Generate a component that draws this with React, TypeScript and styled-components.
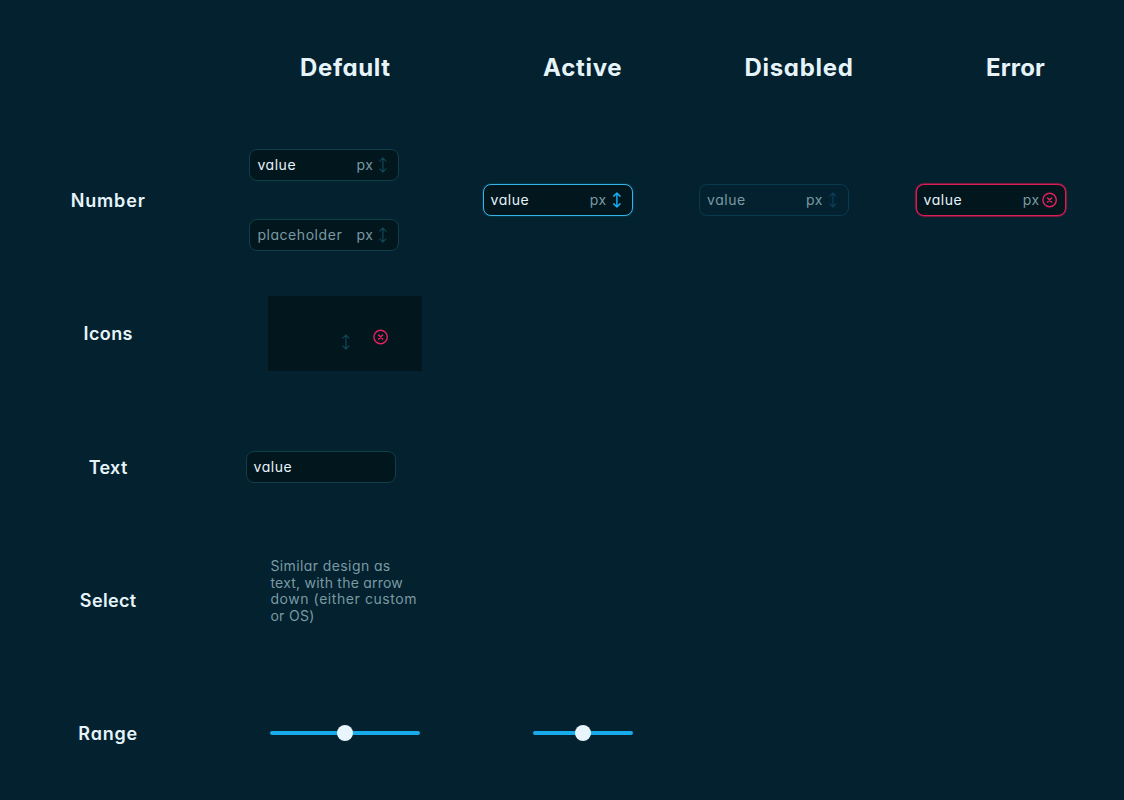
import React from "react";
import styled, { createGlobalStyle, css } from "styled-components";

const Global = createGlobalStyle`
  * { box-sizing: border-box; }
  body {
    margin: 0;
    background: #03212e;
    font-family: Inter, "Open Sans", sans-serif;
    font-feature-settings: "cv11";
  }
`;

type FieldState = "default" | "active" | "disabled" | "error";

const Board = styled.main`
  display: grid;
  grid-template-columns: 216.4px 258px 216.6px 216px 217px;
  grid-template-rows: repeat(6, 1fr);
  width: 1124px;
  height: 800px;
  overflow: hidden;
`;

const ColumnTitle = styled.h2<{ $spacing: number }>`
  margin: 0;
  padding-top: 2px;
  place-self: center;
  color: #e6f4fa;
  font-size: 24px;
  font-weight: 700;
  line-height: 32px;
  letter-spacing: ${(p) => p.$spacing}px;
`;

const RowTitle = styled.h3<{ $spacing: number }>`
  margin: 0;
  padding-top: 2px;
  place-self: center;
  color: #e6f4fa;
  font-size: 18px;
  font-weight: 600;
  line-height: 24px;
  letter-spacing: ${(p) => p.$spacing}px;
`;

const Cell = styled.div<{ $indent?: number }>`
  display: flex;
  flex-direction: column;
  justify-content: center;
  gap: 38px;
  align-items: ${(p) => (p.$indent === undefined ? "center" : "flex-start")};
  padding-left: ${(p) => p.$indent ?? 0}px;
`;

const frames = {
  default: css`
    border-color: #0f3f4b;
    background: #02161e;
  `,
  active: css`
    border-color: #35b4ec;
    background: #02161e;
    box-shadow: 0 0 2px rgba(30, 170, 240, 0.45);
  `,
  disabled: css`
    border-color: #0b3a4e;
    background: transparent;
  `,
  error: css`
    border-color: #d81f56;
    background: #02161e;
    box-shadow: 0 0 0 0.5px #b01c4c, 0 0 3px rgba(240, 30, 90, 0.5);
  `,
};

const Field = styled.div<{ $state: FieldState }>`
  display: flex;
  align-items: center;
  gap: 2px;
  width: 150px;
  height: 32px;
  padding: 0 7px;
  border: 1px solid;
  border-radius: 8px;
  font-size: 14px;
  font-weight: 400;
  line-height: 20px;
  ${(p) => frames[p.$state]}
`;

const Value = styled.span<{ $muted: boolean }>`
  flex: 1;
  letter-spacing: 0.55px;
  color: ${(p) => (p.$muted ? "#7a9aa3" : "#e6f4fa")};
`;

const Unit = styled.span`
  color: #7a9aa3;
  letter-spacing: 0.5px;
`;

const Icon = styled.svg`
  display: block;
  flex: none;
  width: 16px;
  height: 16px;
  fill: none;
  stroke: currentColor;
  stroke-linecap: round;
  stroke-linejoin: round;
`;

const IconPanel = styled.div`
  display: flex;
  align-items: center;
  justify-content: flex-end;
  gap: 19px;
  width: 154px;
  height: 75px;
  padding-right: 33.4px;
  background: #02161e;
`;

const IconSlot = styled.span<{ $drop: number }>`
  padding-top: ${(p) => p.$drop}px;
`;

const Note = styled.p`
  margin: 0;
  padding-bottom: 17px;
  width: 150px;
  color: #7a9aa3;
  font-size: 14px;
  font-weight: 400;
  line-height: 16.8px;
`;

const NoteLine = styled.span<{ $spacing: number }>`
  display: block;
  white-space: nowrap;
  letter-spacing: ${(p) => p.$spacing}px;
`;

const Track = styled.div<{ $width: number }>`
  display: flex;
  align-items: center;
  justify-content: center;
  width: ${(p) => p.$width}px;
  height: 4px;
  border-radius: 2px;
  background: #18abec;
`;

const Thumb = styled.span`
  flex: none;
  width: 16px;
  height: 16px;
  border-radius: 50%;
  background: #e9f5fd;
`;

function Stepper({ color, weight = 1.2 }: { color: string; weight?: number }) {
  return (
    <Icon viewBox="0 0 16 16" style={{ color }} strokeWidth={weight}>
      <path d="M7.9 1.3v13.4M4.8 4.1 7.9 1 11 4.1M4.8 11.9 7.9 15l3.1-3.1" />
    </Icon>
  );
}

function ErrorMark() {
  return (
    <Icon viewBox="0 0 16 16" style={{ color: "#e5215c" }} strokeWidth={1.4}>
      <circle cx="7.6" cy="8" r="6.7" />
      <path d="m5.6 6 4 4m0-4-4 4" strokeWidth={1.6} />
    </Icon>
  );
}

const stepperColor = { default: "#0f4654", active: "#18abec", disabled: "#0b3f59" };

function NumberField({ state = "default", text = "value" }: { state?: FieldState; text?: string }) {
  const muted = state === "disabled" || text === "placeholder";
  return (
    <Field $state={state}>
      <Value $muted={muted}>{text}</Value>
      <Unit>px</Unit>
      {state === "error" ? (
        <ErrorMark />
      ) : (
        <Stepper color={stepperColor[state]} weight={state === "active" ? 1.5 : 1.2} />
      )}
    </Field>
  );
}

const noteLines: [string, number][] = [
  ["Similar design as", 0.4],
  ["text, with the arrow", 0.23],
  ["down (either custom", 0.57],
  ["or OS)", 0.3],
];

export default function App() {
  return (
    <>
      <Global />
      <Board>
        <Cell />
        <ColumnTitle $spacing={0.6}>Default</ColumnTitle>
        <ColumnTitle $spacing={0.7}>Active</ColumnTitle>
        <ColumnTitle $spacing={0.68}>Disabled</ColumnTitle>
        <ColumnTitle $spacing={0.2}>Error</ColumnTitle>

        <RowTitle $spacing={0.85}>Number</RowTitle>
        <Cell $indent={33}>
          <NumberField />
          <NumberField text="placeholder" />
        </Cell>
        <Cell $indent={8.2}>
          <NumberField state="active" />
        </Cell>
        <Cell $indent={8}>
          <NumberField state="disabled" />
        </Cell>
        <Cell $indent={8.6}>
          <NumberField state="error" />
        </Cell>

        <RowTitle $spacing={0.4}>Icons</RowTitle>
        <Cell>
          <IconPanel>
            <IconSlot $drop={17}>
              <Stepper color="#0f4654" />
            </IconSlot>
            <IconSlot $drop={7}>
              <ErrorMark />
            </IconSlot>
          </IconPanel>
        </Cell>
        <Cell />
        <Cell />
        <Cell />

        <RowTitle $spacing={0.3}>Text</RowTitle>
        <Cell $indent={29.2}>
          <Field $state="default">
            <Value $muted={false}>value</Value>
          </Field>
        </Cell>
        <Cell />
        <Cell />
        <Cell />

        <RowTitle $spacing={0.35}>Select</RowTitle>
        <Cell>
          <Note>
            {noteLines.map(([line, spacing]) => (
              <NoteLine key={line} $spacing={spacing}>
                {line}{" "}
              </NoteLine>
            ))}
          </Note>
        </Cell>
        <Cell />
        <Cell />
        <Cell />

        <RowTitle $spacing={0.8}>Range</RowTitle>
        <Cell>
          <Track $width={150}>
            <Thumb />
          </Track>
        </Cell>
        <Cell>
          <Track $width={100}>
            <Thumb />
          </Track>
        </Cell>
      </Board>
    </>
  );
}
